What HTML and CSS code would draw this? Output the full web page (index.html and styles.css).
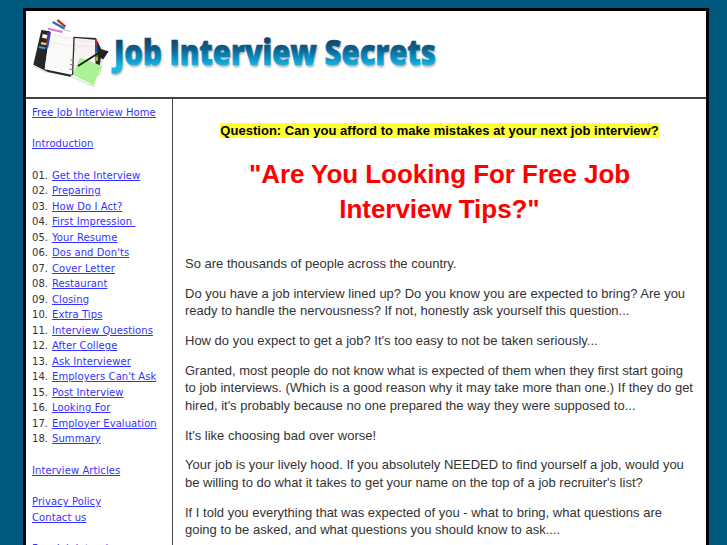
FILE: index.html
```html
<!DOCTYPE html>
<html lang="en">
<head>
<meta charset="utf-8">
<title>Job Interview Secrets</title>
<link rel="stylesheet" href="styles.css">
</head>
<body>
<div class="page">
  <header class="header">
    <svg class="logo" width="420" height="76" viewBox="0 0 420 76" xmlns="http://www.w3.org/2000/svg">
      <defs>
        <linearGradient id="blue" x1="0" y1="18" x2="0" y2="47" gradientUnits="userSpaceOnUse">
          <stop offset="0" stop-color="#123f5e"/>
          <stop offset="0.4" stop-color="#0a5f8c"/>
          <stop offset="0.75" stop-color="#0595c8"/>
          <stop offset="1" stop-color="#1fb4e2"/>
        </linearGradient>
        <filter id="soft" x="-10%" y="-10%" width="120%" height="130%">
          <feDropShadow dx="1" dy="2" stdDeviation="1.5" flood-color="#777" flood-opacity="0.6"/>
        </filter>
        <filter id="blur"><feGaussianBlur stdDeviation="0.8"/></filter>
        <filter id="iconblur"><feGaussianBlur stdDeviation="1"/></filter>
      </defs>
      <g transform="translate(-2,-3) scale(0.3333)">
        <g filter="url(#soft)">
          <path d="M38 40 L66 46 L135 60 L204 66 L222 100 L240 104 L222 130 L216 172 L200 178 L196 210 L130 180 L50 165 L14 148 Z" fill="#fff"/>
        </g>
        <g filter="url(#iconblur)">
          <path d="M40 42 L66 46 L50 160 L130 176 L128 182 L60 168 L16 146 Z" fill="#262626"/>
          <path d="M135 62 L204 66 L222 104 L212 172 L130 178 Z" fill="#2c2c2c"/>
          <path d="M66 50 L136 64 L132 174 L50 158 Z" fill="#fbf8f8"/>
          <path d="M140 66 L201 71 L203 160 L136 170 Z" fill="#f7f3f3"/>
          <path d="M66 48 L58 94" stroke="#3a3ae8" stroke-width="6"/>
          <path d="M60 46 L56 84" stroke="#c02030" stroke-width="3"/>
          <path d="M204 70 L205 90" stroke="#c8302a" stroke-width="5"/>
          <path d="M205 90 L206 108" stroke="#2a50c0" stroke-width="5"/>
          <path d="M206 108 L207 122" stroke="#2aa040" stroke-width="5"/>
          <path d="M207 122 L207 134" stroke="#e0c820" stroke-width="5"/>
          <path d="M60 38 L104 48" stroke="#d878d8" stroke-width="6"/>
          <path d="M74 18 L110 38" stroke="#3068b8" stroke-width="7"/>
          <path d="M88 12 L112 32" stroke="#b83818" stroke-width="7"/>
          <path d="M108 42 L128 46" stroke="#ccc" stroke-width="4"/>
          <path d="M44 54 L58 57 L56 68 L42 65 Z" fill="#f2f2f2"/>
          <path d="M40 78 L56 81 L54 88 L38 85 Z" fill="#e2cf60"/>
          <path d="M34 90 L53 94 L51 100 L32 96 Z" fill="#2ca4d4"/>
          <path d="M134 68 H142 M134 84 H142 M134 100 H142 M128 132 H138 M126 146 H136 M124 160 H134" stroke="#8a7a70" stroke-width="3"/>
          <path d="M76 58 L128 68 M72 80 L126 90 M148 74 L196 78 M146 90 L196 92" stroke="#e8d4d4" stroke-width="1.5"/>
          <path d="M156 124 L222 150 L196 208 L134 176 L146 150 Z" fill="#a9f394"/>
          <path d="M150 150 L226 102" stroke="#1e1e1e" stroke-width="6"/>
          <path d="M212 98 L242 106 L226 130 L212 124 Z" fill="#222"/>
        </g>
      </g>
      <text class="logo-shadow" x="85" y="47.5" textLength="322" lengthAdjust="spacingAndGlyphs" filter="url(#blur)">Job Interview Secrets</text>
      <text class="logo-text" x="84" y="46" textLength="322" lengthAdjust="spacingAndGlyphs" fill="url(#blue)" stroke="url(#blue)">Job Interview Secrets</text>
    </svg>
  </header>
  <div class="columns">
    <nav class="sidebar">
      <p class="nav-block"><a href="#">Free Job Interview Home</a></p>
      <p class="nav-block"><a href="#">Introduction</a></p>
      <ol class="chapters">
        <li><span class="num">01.</span><a href="#">Get the Interview</a></li>
        <li><span class="num">02.</span><a href="#">Preparing</a></li>
        <li><span class="num">03.</span><a href="#">How Do I Act?</a></li>
        <li><span class="num">04.</span><a href="#">First Impression&nbsp;</a></li>
        <li><span class="num">05.</span><a href="#">Your Resume</a></li>
        <li><span class="num">06.</span><a href="#">Dos and Don'ts</a></li>
        <li><span class="num">07.</span><a href="#">Cover Letter</a></li>
        <li><span class="num">08.</span><a href="#">Restaurant</a></li>
        <li><span class="num">09.</span><a href="#">Closing</a></li>
        <li><span class="num">10.</span><a href="#">Extra Tips</a></li>
        <li><span class="num">11.</span><a href="#">Interview Questions</a></li>
        <li><span class="num">12.</span><a href="#">After College</a></li>
        <li><span class="num">13.</span><a href="#">Ask Interviewer</a></li>
        <li><span class="num">14.</span><a href="#">Employers Can't Ask</a></li>
        <li><span class="num">15.</span><a href="#">Post Interview</a></li>
        <li><span class="num">16.</span><a href="#">Looking For</a></li>
        <li><span class="num">17.</span><a href="#">Employer Evaluation</a></li>
        <li><span class="num">18.</span><a href="#">Summary</a></li>
      </ol>
      <p class="nav-block"><a href="#">Interview Articles</a></p>
      <p class="nav-block"><a href="#">Privacy Policy</a><br><a href="#">Contact us</a></p>
      <p class="nav-block"><a href="#">Free Job Interview</a></p>
    </nav>
    <main class="content">
      <p class="question"><mark>Question: Can you afford to make mistakes at your next job interview?</mark></p>
      <h1 class="headline">"Are You Looking For Free Job<br>Interview Tips?"</h1>
      <p>So are thousands of people across the country.</p>
      <p>Do you have a job interview lined up? Do you know you are expected to bring? Are you ready to handle the nervousness? If not, honestly ask yourself this question...</p>
      <p>How do you expect to get a job? It's too easy to not be taken seriously...</p>
      <p>Granted, most people do not know what is expected of them when they first start going to job interviews. (Which is a good reason why it may take more than one.) If they do get hired, it's probably because no one prepared the way they were supposed to...</p>
      <p>It's like choosing bad over worse!</p>
      <p>Your job is your lively hood. If you absolutely NEEDED to find yourself a job, would you be willing to do what it takes to get your name on the top of a job recruiter's list?</p>
      <p>If I told you everything that was expected of you - what to bring, what questions are going to be asked, and what questions you should know to ask....</p>
    </main>
  </div>
</div>
</body>
</html>
```
FILE: styles.css
```css
html, body {
  margin: 0;
  padding: 0;
  height: 545px;
  overflow: hidden;
}
body {
  background: #005a80;
  padding-top: 8px;
  box-sizing: border-box;
}
.page {
  width: 680px;
  margin-left: 23px;
  border: 3px solid #000;
  background: #fff;
}
.header {
  display: flex;
  align-items: flex-start;
  padding: 8px 0 0 4px;
  height: 78px;
  border-bottom: 2px solid #444;
}
.logo { display: block; }
.logo-text, .logo-shadow {
  font-family: "Open Sans", "Liberation Sans", sans-serif;
  font-weight: 800;
  font-size: 35px;
  stroke-width: 0.7px;
}
.logo-shadow { fill: #aaa; }
.columns {
  display: flex;
  align-items: stretch;
}
.sidebar {
  width: 147px;
  flex: none;
  box-sizing: border-box;
  padding: 5.5px 0 0 6px;
  border-right: 1px solid #444;
  font-family: "DejaVu Sans", sans-serif;
  font-size: 10px;
  letter-spacing: 0.07px;
  line-height: 15.5px;
  color: #333;
}
.sidebar a { color: #3333ff; }
.nav-block { margin: 0 0 16px; }
.chapters {
  list-style: none;
  margin: 0 0 16px;
  padding: 0;
}
.num {
  display: inline-block;
  width: 20px;
}
.content {
  flex: 1;
  min-width: 0;
  padding: 0 12px;
  font-family: "Liberation Sans", Arial, sans-serif;
  font-size: 13px;
  line-height: 17.5px;
  color: #333;
}
.content p { margin: 0 0 12.3px; }
.content .question {
  margin: 23px 0 0;
  line-height: 18px;
  text-align: center;
  font-weight: 700;
  letter-spacing: 0.03px;
  color: #000;
}
.question mark { background: #ffff33; color: #000; }
.headline {
  margin: 17px 0 28px;
  text-align: center;
  color: #ff0000;
  font-size: 26px;
  letter-spacing: -0.05px;
  line-height: 35px;
  font-weight: 700;
}
```
